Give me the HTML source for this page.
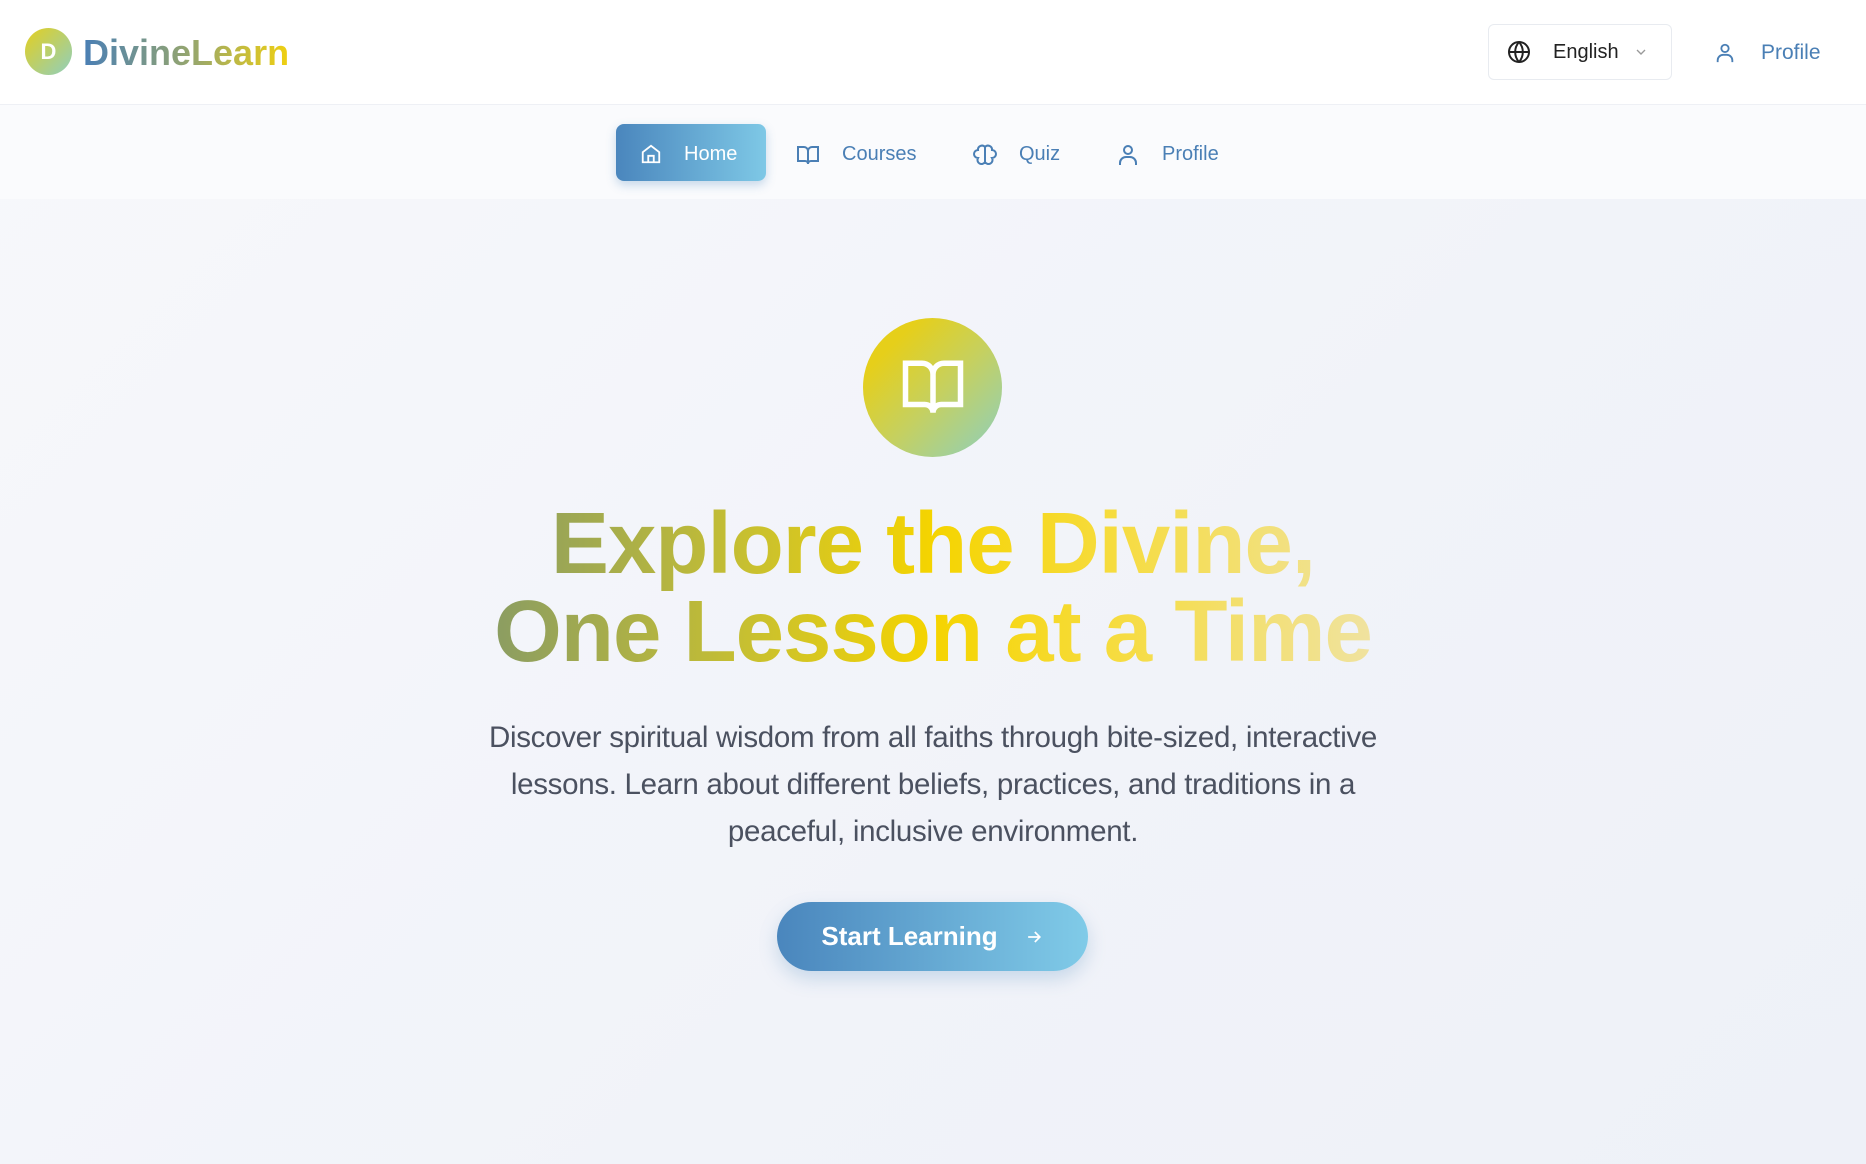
<!DOCTYPE html>
<html><head><meta charset="utf-8"><style>
*{margin:0;padding:0;box-sizing:border-box}
body{width:1866px;height:1164px;overflow:hidden;font-family:"Liberation Sans",sans-serif;background:linear-gradient(135deg,#f7f8fb 0%,#f1f3f9 60%,#eef1f8 100%);position:relative}
.hdr{position:absolute;left:0;top:0;width:1866px;height:105px;background:#fff;border-bottom:1px solid #eef0f5}
.logo{position:absolute;left:25px;top:28px;width:47px;height:47px;border-radius:50%;background:linear-gradient(135deg,#e4cf1e,#8fcfbf);color:#fff;font-weight:bold;font-size:22px;display:flex;align-items:center;justify-content:center}
.brand{position:absolute;left:83px;top:32px;font-weight:bold;font-size:36px;letter-spacing:0px;background:linear-gradient(90deg,#4a7fb5,#9aa86a 55%,#f0d010);-webkit-background-clip:text;color:transparent}
.lang{position:absolute;left:1488px;top:24px;width:184px;height:56px;border:1px solid #e8ebf0;border-radius:6px;background:#fff;display:flex;align-items:center;padding-left:18px;font-size:20px;color:#222}
.plink{position:absolute;left:1714px;top:41px;font-size:21px;color:#4a7fb5;display:flex;align-items:center;gap:25px}
.nav{position:absolute;left:0;top:105px;width:1866px;height:94px;background:#fafbfd}
.item{position:absolute;top:126px;height:57px;display:flex;align-items:center;font-size:20px;color:#4a7fb5;gap:22px}
.home{top:124px;left:616px;width:150px;border-radius:8px;background:linear-gradient(90deg,#4a86bd,#7ec8e6);color:#fff;padding-left:24px;padding-top:3px;box-shadow:0 4px 10px rgba(74,134,189,.3)}
.circ{position:absolute;left:863px;top:318px;width:139px;height:139px;border-radius:50%;background:linear-gradient(135deg,#e6cf1a 20%,#c5d060 55%,#8ccfc0 100%);display:flex;align-items:center;justify-content:center}
h1{position:absolute;left:0;width:1866px;top:500px;text-align:center;font-size:87px;line-height:88px;font-weight:bold;letter-spacing:-1px}
h1 span{background:linear-gradient(90deg,#869a66 0%,#c8c030 30%,#f5d400 50%,#f6dc40 70%,#efe3a8 100%);-webkit-background-clip:text;color:transparent;display:inline-block;width:920px}
p{position:absolute;left:458px;width:950px;top:714px;text-align:center;font-size:29.5px;line-height:47px;color:#4b5160;letter-spacing:-0.3px}
.btn{position:absolute;left:777px;top:902px;width:311px;height:69px;border-radius:35px;background:linear-gradient(90deg,#4a86bd,#80cbe8);color:#fff;font-size:26px;font-weight:bold;display:flex;align-items:center;justify-content:center;gap:26px;box-shadow:0 8px 18px rgba(74,134,189,.25)}
</style></head><body>
<div class="hdr">
<div class="logo">D</div>
<div class="brand">DivineLearn</div>
<div class="lang"><svg width="24" height="24" viewBox="0 0 24 24" fill="none" stroke="#222" stroke-width="2"><circle cx="12" cy="12" r="10"/><path d="M2 12h20M12 2a15 15 0 0 1 0 20M12 2a15 15 0 0 0 0 20"/></svg><span style="margin-left:22px">English</span><svg style="margin-left:14px" width="16" height="16" viewBox="0 0 24 24" fill="none" stroke="#999" stroke-width="2"><path d="M6 9l6 6 6-6"/></svg></div>
<div class="plink"><svg width="22" height="22" viewBox="0 0 24 24" fill="none" stroke="#4a7fb5" stroke-width="2"><circle cx="12" cy="7" r="4"/><path d="M4 22v-2a6 6 0 0 1 6-6h4a6 6 0 0 1 6 6v2"/></svg>Profile</div>
</div>
<div class="nav"></div>
<div class="item home"><svg width="22" height="22" viewBox="0 0 24 24" fill="none" stroke="#fff" stroke-width="2"><path d="M3 10l9-7 9 7v11H3z"/><path d="M9 21v-7h6v7"/></svg>Home</div>
<div class="item" style="left:796px"><svg width="24" height="24" viewBox="0 0 24 24" fill="none" stroke="#4a7fb5" stroke-width="2"><path d="M2 4h6a4 4 0 0 1 4 4v13a3 3 0 0 0-3-3H2zM22 4h-6a4 4 0 0 0-4 4v13a3 3 0 0 1 3-3h7z"/></svg>Courses</div>
<div class="item" style="left:973px"><svg width="24" height="24" viewBox="0 0 24 24" fill="none" stroke="#4a7fb5" stroke-width="2"><path d="M12 4a4 4 0 0 0-7 3 4 4 0 0 0 0 8 4 4 0 0 0 7 4zM12 4a4 4 0 0 1 7 3 4 4 0 0 1 0 8 4 4 0 0 1-7 4zM12 4v16"/></svg>Quiz</div>
<div class="item" style="left:1116px"><svg width="24" height="24" viewBox="0 0 24 24" fill="none" stroke="#4a7fb5" stroke-width="2"><circle cx="12" cy="7" r="4"/><path d="M4 22v-2a6 6 0 0 1 6-6h4a6 6 0 0 1 6 6v2"/></svg>Profile</div>
<div class="circ"><svg width="66" height="66" viewBox="0 0 24 24" fill="none" stroke="#fff" stroke-width="2"><path d="M2 3h6a4 4 0 0 1 4 4v14a3 3 0 0 0-3-3H2zM22 3h-6a4 4 0 0 0-4 4v14a3 3 0 0 1 3-3h7z"/></svg></div>
<h1><span>Explore the Divine,<br>One Lesson at a Time</span></h1>
<p>Discover spiritual wisdom from all faiths through bite-sized, interactive lessons. Learn about different beliefs, practices, and traditions in a peaceful, inclusive environment.</p>
<div class="btn">Start Learning<svg width="20" height="20" viewBox="0 0 24 24" fill="none" stroke="#fff" stroke-width="2"><path d="M5 12h14M13 6l6 6-6 6"/></svg></div>
</body></html>
